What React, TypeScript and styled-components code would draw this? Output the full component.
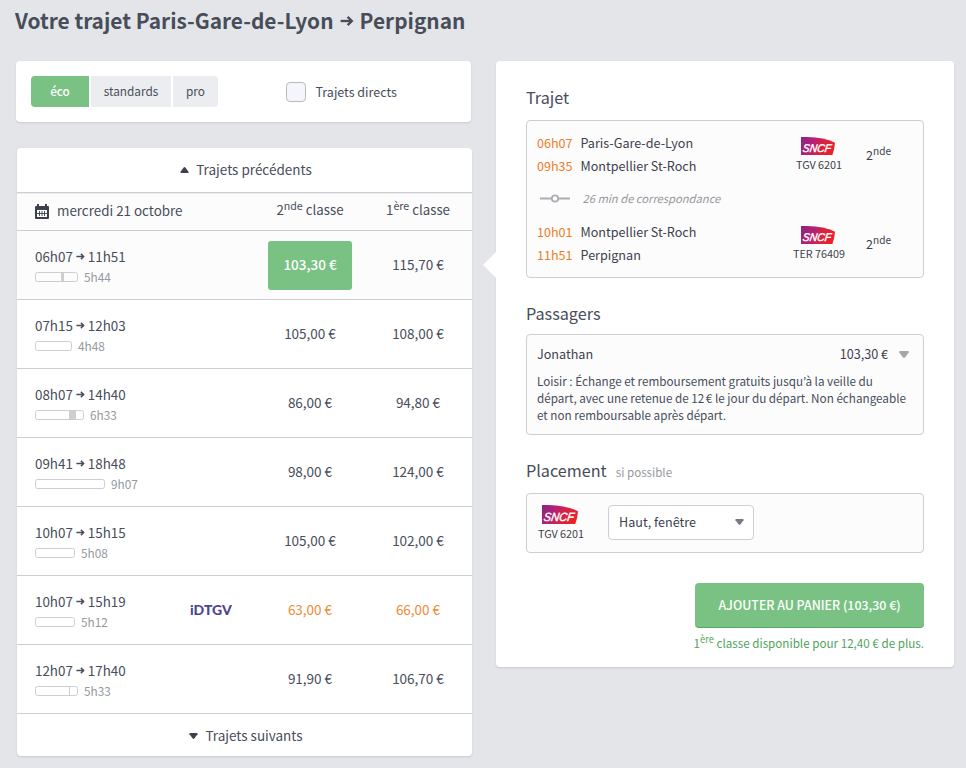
import React from "react";
import styled, { createGlobalStyle, css } from "styled-components";

const colors = {
  page: "#e4e5e9",
  ink: "#484d5a",
  dark: "#3c414d",
  muted: "#96989d",
  line: "#cdced2",
  green: "#79c283",
  greenDark: "#55ab63",
  orange: "#ee7d28",
};

const GlobalStyle = createGlobalStyle`
  *, *::before, *::after { box-sizing: border-box; }
  body {
    margin: 0;
    height: 768px;
    overflow: hidden;
    background: ${colors.page};
    color: ${colors.ink};
    font-family: "Noto Sans CJK KR", "Noto Sans", sans-serif;
    font-size: 13.5px;
    line-height: 20px;
    white-space: nowrap;
  }
  sup { font-size: 0.8em; line-height: 0; vertical-align: 5px; }
`;

const Page = styled.main`
  width: 966px;
  height: 768px;
  padding: 4px 12px 0 15px;
`;

const Title = styled.h1`
  display: flex;
  align-items: center;
  gap: 6px;
  height: 32px;
  margin: 0;
  font-size: 20.85px;
  font-weight: 700;
  line-height: 32px;
  svg { position: relative; top: 1px; }
`;

const Columns = styled.div`
  display: grid;
  grid-template-columns: 457px 458px;
  column-gap: 24px;
  align-items: start;
  margin-top: 25px;
`;

const Card = styled.section`
  background: #fff;
  border-radius: 4px;
  box-shadow: 0 1px 2px rgba(60, 65, 80, 0.16);
`;

const Filters = styled(Card)`
  display: flex;
  align-items: center;
  width: 455px;
  height: 61px;
  margin-left: 1px;
  padding-left: 15px;
`;

const Segments = styled.div`
  display: flex;
  gap: 2px;
  width: 255px;
`;

const Segment = styled.button<{ $width: number; $active?: boolean }>`
  width: ${(p) => p.$width}px;
  height: 31px;
  padding: 0 0 1px;
  border: 0;
  background: ${(p) => (p.$active ? colors.green : "#ecedf1")};
  color: ${(p) => (p.$active ? "#fff" : colors.ink)};
  font: inherit;
  font-size: 11.8px;
  font-weight: ${(p) => (p.$active ? 500 : 400)};
  &:first-child { border-radius: 4px 0 0 4px; }
  &:last-child { border-radius: 0 4px 4px 0; }
`;

const CheckLabel = styled.label`
  display: flex;
  align-items: center;
  gap: 9.5px;
  padding-top: 1px;
  font-size: 12.5px;
`;

const Checkbox = styled.span`
  width: 20px;
  height: 20px;
  border: 1px solid #b9bac0;
  border-radius: 4px;
  background: #f5f6fb;
`;

const Results = styled(Card)`
  width: 455px;
  height: 608px;
  margin: 26px 0 0 2px;
`;

const MoreLink = styled.div<{ $last?: boolean }>`
  display: flex;
  align-items: center;
  justify-content: center;
  gap: 7px;
  height: ${(p) => (p.$last ? 43 : 44)}px;
  padding-left: 3px;
  padding-bottom: ${(p) => (p.$last ? 1 : 2)}px;
  svg { position: relative; top: 1px; }
`;

const ResultGrid = styled.div`
  display: grid;
  grid-template-columns: 155px 78px 84px 24px 84px;
  align-items: center;
  padding-left: 18px;
`;

const HeadRow = styled(ResultGrid)`
  height: 39px;
  padding-bottom: 3px;
  border-top: 1px solid ${colors.line};
  border-bottom: 1px solid ${colors.line};
  box-shadow: inset 0 1px 0 #ececef;
  background: #fcfcfc;
`;

const DateCell = styled.div`
  grid-column: 1 / 3;
  display: flex;
  align-items: center;
  gap: 8px;
  font-size: 13.4px;
  svg { margin-top: 3px; }
`;

const ClassHead = styled.div<{ $first?: boolean }>`
  grid-column: ${(p) => (p.$first ? 5 : 3)};
  text-align: center;
  font-size: 13.3px;
`;

const TripRow = styled(ResultGrid)<{ $selected?: boolean }>`
  height: 69px;
  border-bottom: 1px solid ${colors.line};
  background: ${(p) => (p.$selected ? "#fcfcfc" : "#fff")};
`;

const Schedule = styled.div`
  display: flex;
  flex-direction: column;
  padding-top: 3px;
`;

const Times = styled.div`
  display: flex;
  align-items: center;
  gap: 3px;
  height: 19px;
  margin-bottom: 2px;
  font-size: 13.4px;
  svg { position: relative; top: 1px; }
`;

const Duration = styled.div`
  display: flex;
  align-items: center;
  gap: 6px;
  color: ${colors.muted};
  font-size: 11.8px;
`;

const Bar = styled.span`
  display: flex;
  height: 10px;
  border: 1px solid ${colors.line};
  border-radius: 2.5px;
`;

const Change = styled.span`
  height: 8px;
  background: ${colors.line};
`;

const Price = styled.div<{ $first?: boolean; $selected?: boolean; $promo?: boolean }>`
  grid-column: ${(p) => (p.$first ? 5 : 3)};
  text-align: center;
  height: 49px;
  line-height: 47px;
  border-radius: 3px;
  ${(p) => p.$promo && css`color: #ee8a34;`}
  ${(p) =>
    p.$selected &&
    css`
      background: ${colors.green};
      color: #fff;
      font-weight: 500;
    `}
`;

const Brand = styled.div`
  grid-column: 2;
  color: #4b468f;
  font: 900 14px/20px Lato, sans-serif;
`;

const Detail = styled(Card)`
  position: relative;
  height: 606px;
  padding: 26px 30px 0;
  color: ${colors.dark};
`;

const Pointer = styled.svg`
  position: absolute;
  left: -13px;
  top: 190px;
`;

const SectionTitle = styled.h2`
  display: flex;
  align-items: baseline;
  gap: 9px;
  height: 24px;
  margin: 0;
  color: ${colors.ink};
  font-size: 16.2px;
  font-weight: 400;
  line-height: 20px;
  small { color: ${colors.muted}; font-size: 11.6px; }
`;

const Box = styled.div`
  border: 1px solid ${colors.line};
  border-radius: 4px;
  background: #fcfcfc;
`;

const Journey = styled(Box)`
  height: 158px;
  margin: 9px 0 25px;
  padding: 10px 10px 0;
  font-size: 12.6px;
`;

const Leg = styled.div`
  display: grid;
  grid-template-columns: 240px 84px 1fr;
  height: 46px;
`;

const Stop = styled.div`
  display: flex;
  gap: 7.5px;
  height: 23px;
  line-height: 23px;
`;

const StopTime = styled.time`
  width: 36px;
  color: ${colors.orange};
`;

const Carrier = styled.div`
  display: flex;
  flex-direction: column;
  align-items: center;
  padding-top: 6px;
  font-size: 10.8px;
  line-height: 19px;
  svg { margin-right: 2px; }
`;

const TravelClass = styled.div`
  padding: 14px 0 0 5px;
`;

const Connection = styled.div`
  display: flex;
  align-items: center;
  gap: 12.5px;
  height: 43px;
  padding: 0 0 1px 3px;
  color: ${colors.muted};
  font-size: 11.2px;
  font-style: italic;
`;

const Passenger = styled(Box)`
  height: 101px;
  margin: 7px 0 25px;
  padding: 9px 10px 0;
`;

const PassengerHead = styled.div`
  display: flex;
  align-items: center;
  padding-right: 4px;
  font-size: 12.6px;
  svg { margin-left: 11px; }
`;

const PassengerName = styled.span`
  flex: 1;
`;

const Conditions = styled.p`
  margin: 8px 0 0;
  color: ${colors.ink};
  font-size: 11.7px;
  line-height: 17px;
`;

const ThinSpace = styled.span`
  display: inline-block;
  width: 1.5px;
`;

const Seating = styled(Box)`
  display: flex;
  height: 60px;
  margin-top: 9px;
  padding: 11px 12px 0 11px;
`;

const SeatCarrier = styled(Carrier)`
  width: 46px;
  margin-right: 24px;
  padding: 0;
`;

const Select = styled.div`
  display: flex;
  align-items: center;
  justify-content: space-between;
  width: 146px;
  height: 35px;
  padding: 0 9px 1px 10px;
  border: 1px solid ${colors.line};
  border-radius: 4px;
  background: #fff;
  font-size: 12.6px;
`;

const Actions = styled.div`
  display: flex;
  flex-direction: column;
  align-items: flex-end;
  margin-top: 30px;
`;

const AddButton = styled.button`
  width: 229px;
  height: 45px;
  padding: 0;
  border: 0;
  border-bottom: 1px solid ${colors.greenDark};
  border-radius: 4px;
  background: ${colors.green};
  color: #fff;
  font: inherit;
  font-size: 12.4px;
  font-weight: 500;
`;

const Upgrade = styled.div`
  margin-top: 5px;
  color: #4fa35d;
  font-size: 11.65px;
`;

const Arrow = ({ size = 9 }: { size?: number }) => (
  <svg width={size} height={size} viewBox="0 0 9 9" fill="none" stroke="currentColor" strokeWidth="1.5">
    <path d="M.4 4.5H7.5" />
    <path d="M4.9 1.9 L7.6 4.5 L4.9 7.1" />
  </svg>
);

const Triangle = ({ up, width, height, color }: { up?: boolean; width: number; height: number; color: string }) => (
  <svg width={width} height={height} viewBox="0 0 10 7">
    <path
      d={up ? "M5 0 Q5.6 0 6.2 .8 L9.7 5.6 Q10 7 9 7 H1 Q0 7 .3 5.6 L3.8 .8 Q4.4 0 5 0Z" : "M5 7 Q4.4 7 3.8 6.2 L.3 1.4 Q0 0 1 0 H9 Q10 0 9.7 1.4 L6.2 6.2 Q5.6 7 5 7Z"}
      fill={color}
    />
  </svg>
);

const Calendar = () => (
  <svg width="14" height="15" viewBox="0 0 14 15">
    <path fill={colors.dark} d="M2 0h2v2h6V0h2v2h1q1 0 1 1v11q0 1-1 1H1q-1 0-1-1V3q0-1 1-1h1z" />
    <path fill="#fcfcfc" d="M2 6h10v7H2z" />
    <path fill="none" stroke={colors.dark} d="M2 9.5h10M4.5 7v5M7 7v5M9.5 7v5" strokeWidth="0.9" />
  </svg>
);

const Sncf = ({ id, width = 34 }: { id: string; width?: number }) => (
  <svg width={width} height={(width * 18) / 34} viewBox="0 0 34 18">
    <defs>
      <linearGradient id={id} x1="0" y1="0" x2="1" y2="0.25">
        <stop offset="0" stopColor="#84287f" />
        <stop offset="0.38" stopColor="#b42078" />
        <stop offset="0.7" stopColor="#d8233f" />
        <stop offset="1" stopColor="#e8212a" />
      </linearGradient>
    </defs>
    <path d="M0 0 H6 Q23 .3 34 5.8 Q33.6 12 31.4 18 H0Z" fill={`url(#${id})`} />
    <text
      transform="translate(1.2 15.4) skewX(-8)"
      textLength="28.5"
      lengthAdjust="spacingAndGlyphs"
      fill="#fff"
      stroke="#fff"
      strokeWidth="0.4"
      fontFamily="Liberation Sans"
      fontSize="11.2"
      fontStyle="italic"
    >
      SNCF
    </text>
  </svg>
);

type TripData = {
  from: string;
  to: string;
  duration: string;
  bar: number;
  change?: [number, number];
  second: string;
  first: string;
  brand?: string;
  selected?: boolean;
};

const trips: TripData[] = [
  { from: "06h07", to: "11h51", duration: "5h44", bar: 43, change: [25, 3], second: "103,30 €", first: "115,70 €", selected: true },
  { from: "07h15", to: "12h03", duration: "4h48", bar: 37, second: "105,00 €", first: "108,00 €" },
  { from: "08h07", to: "14h40", duration: "6h33", bar: 49, change: [33, 7], second: "86,00 €", first: "94,80 €" },
  { from: "09h41", to: "18h48", duration: "9h07", bar: 70, second: "98,00 €", first: "124,00 €" },
  { from: "10h07", to: "15h15", duration: "5h08", bar: 40, second: "105,00 €", first: "102,00 €" },
  { from: "10h07", to: "15h19", duration: "5h12", bar: 40, second: "63,00 €", first: "66,00 €", brand: "iDTGV" },
  { from: "12h07", to: "17h40", duration: "5h33", bar: 43, change: [33, 1], second: "91,90 €", first: "106,70 €" },
];

const Trip = ({ trip }: { trip: TripData }) => (
  <TripRow $selected={trip.selected}>
    <Schedule>
      <Times>
        <span>{trip.from}</span>
        <Arrow />
        <span>{trip.to}</span>
      </Times>
      <Duration>
        <Bar style={{ width: trip.bar }}>
          {trip.change && <Change style={{ marginLeft: trip.change[0], width: trip.change[1] }} />}
        </Bar>
        {trip.duration}
      </Duration>
    </Schedule>
    {trip.brand && <Brand>{trip.brand}</Brand>}
    <Price $selected={trip.selected} $promo={!!trip.brand}>{trip.second}</Price>
    <Price $first $promo={!!trip.brand}>{trip.first}</Price>
  </TripRow>
);

const JourneyLeg = ({ stops, train, id }: { stops: [string, string][]; train: string; id: string }) => (
  <Leg>
    <div>
      {stops.map(([time, place]) => (
        <Stop key={time}>
          <StopTime>{time}</StopTime>
          {place}
        </Stop>
      ))}
    </div>
    <Carrier>
      <Sncf id={id} />
      {train}
    </Carrier>
    <TravelClass>2<sup>nde</sup></TravelClass>
  </Leg>
);

export default function App() {
  return (
    <Page>
      <GlobalStyle />
      <Title>
        <span>Votre trajet Paris-Gare-de-Lyon</span>
        <Arrow size={14} />
        <span>Perpignan</span>
      </Title>
      <Columns>
        <div>
          <Filters>
            <Segments>
              <Segment $width={58} $active>éco</Segment>
              <Segment $width={80}>standards</Segment>
              <Segment $width={45}>pro</Segment>
            </Segments>
            <CheckLabel>
              <Checkbox />
              Trajets directs
            </CheckLabel>
          </Filters>
          <Results>
            <MoreLink>
              <Triangle up width={9} height={6} color={colors.dark} />
              Trajets précédents
            </MoreLink>
            <HeadRow>
              <DateCell>
                <Calendar />
                mercredi 21 octobre
              </DateCell>
              <ClassHead>2<sup>nde</sup> classe</ClassHead>
              <ClassHead $first>1<sup>ère</sup> classe</ClassHead>
            </HeadRow>
            {trips.map((trip) => (
              <Trip key={trip.to} trip={trip} />
            ))}
            <MoreLink $last>
              <Triangle width={9} height={6} color={colors.dark} />
              Trajets suivants
            </MoreLink>
          </Results>
        </div>
        <Detail>
          <Pointer width="14" height="28" viewBox="0 0 14 28">
            <path d="M14 0 L0 14 L14 28Z" fill="#fff" />
          </Pointer>
          <SectionTitle>Trajet</SectionTitle>
          <Journey>
            <JourneyLeg id="leg-tgv" train="TGV 6201" stops={[["06h07", "Paris-Gare-de-Lyon"], ["09h35", "Montpellier St-Roch"]]} />
            <Connection>
              <svg width="30" height="9" viewBox="0 0 30 9" fill="none" stroke="#acadb2" strokeWidth="1.8">
                <path d="M0 4.5H11.5M18.5 4.5H30" />
                <circle cx="15" cy="4.5" r="3.2" />
              </svg>
              26 min de correspondance
            </Connection>
            <JourneyLeg id="leg-ter" train="TER 76409" stops={[["10h01", "Montpellier St-Roch"], ["11h51", "Perpignan"]]} />
          </Journey>
          <SectionTitle>Passagers</SectionTitle>
          <Passenger>
            <PassengerHead>
              <PassengerName>Jonathan</PassengerName>
              103,30 €
              <Triangle width={10} height={7} color="#a6a6ab" />
            </PassengerHead>
            <Conditions>
              Loisir : Échange et remboursement gratuits jusqu’à la veille du<br />
              départ, avec une retenue de 12<ThinSpace />€ le jour du départ. Non échangeable<br />
              et non remboursable après départ.
            </Conditions>
          </Passenger>
          <SectionTitle>
            Placement <small>si possible</small>
          </SectionTitle>
          <Seating>
            <SeatCarrier>
              <Sncf id="seat-tgv" width={36} />
              TGV 6201
            </SeatCarrier>
            <Select>
              Haut, fenêtre
              <Triangle width={9} height={6} color="#777983" />
            </Select>
          </Seating>
          <Actions>
            <AddButton>AJOUTER AU PANIER (103,30 €)</AddButton>
            <Upgrade>1<sup>ère</sup> classe disponible pour 12,40 € de plus.</Upgrade>
          </Actions>
        </Detail>
      </Columns>
    </Page>
  );
}
